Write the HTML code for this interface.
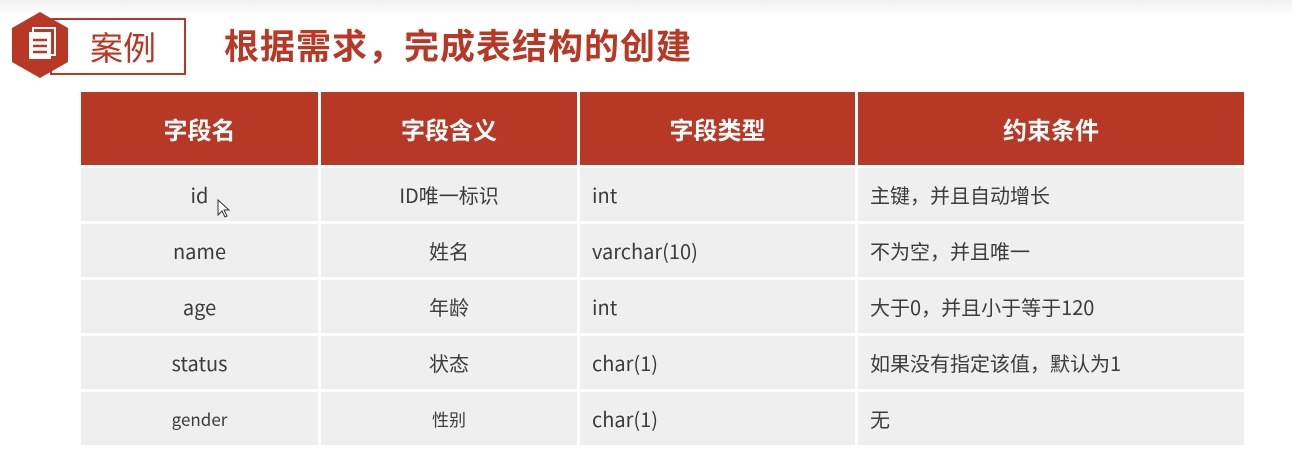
<!DOCTYPE html>
<html><head><meta charset="utf-8"><style>
body{margin:0;width:1292px;height:462px;background:#fff;position:relative;overflow:hidden;font-family:"Noto Sans CJK SC","Liberation Sans",sans-serif}
.top{position:absolute;left:0;top:0;width:1292px;height:16px;background:linear-gradient(#f0f0f0,#fff)}
.box{position:absolute;left:50px;top:18px;width:132px;height:53px;border:2px solid #b83826}
.box span{position:absolute;left:38px;top:4px;font-size:33px;color:#b83826;line-height:44px}
.title{position:absolute;left:224px;top:21px;font-size:35px;font-weight:bold;color:#b83826;line-height:48px;letter-spacing:1px}
table{position:absolute;left:81px;top:92px;border-collapse:separate;border-spacing:0;width:1163px;table-layout:fixed}
th{background:#b83826;color:#fff;font-size:24px;font-weight:bold;height:73px;padding:0;border-right:3px solid #fff;text-align:center;line-height:30px}
td{background:#efefef;height:53px;padding:0;border-right:3px solid #fff;border-top:3px solid #fff;font-size:20px;color:#3c3c3c;line-height:26px;vertical-align:middle}
th:last-child,td:last-child{border-right:none}
.c{text-align:center}.l{padding-left:12px}
</style></head><body>
<div class="top"></div>
<div class="box"><span>案例</span></div>
<svg style="position:absolute;left:10px;top:11px" width="60" height="68" viewBox="0 0 60 68">
<polygon points="30,1 58,17 58,51 30,67 2,51 2,17" fill="#b83826"/>
<rect x="23" y="17" width="22" height="27" fill="none" stroke="#fff" stroke-width="2"/>
<rect x="19" y="21" width="22" height="27" fill="#fff"/>
<path d="M23 29h14M23 35h14M23 41h14" stroke="#b83826" stroke-width="2.5"/>
</svg>
<div class="title">根据需求，完成表结构的创建</div>
<table>
<colgroup><col style="width:240px"><col style="width:259px"><col style="width:278px"><col style="width:386px"></colgroup>
<tr><th>字段名</th><th>字段含义</th><th>字段类型</th><th>约束条件</th></tr>
<tr><td class="c">id</td><td class="c">ID唯一标识</td><td class="l">int</td><td class="l">主键，并且自动增长</td></tr>
<tr><td class="c">name</td><td class="c">姓名</td><td class="l">varchar(10)</td><td class="l">不为空，并且唯一</td></tr>
<tr><td class="c">age</td><td class="c">年龄</td><td class="l">int</td><td class="l">大于0，并且小于等于120</td></tr>
<tr><td class="c">status</td><td class="c">状态</td><td class="l">char(1)</td><td class="l">如果没有指定该值，默认为1</td></tr>
<tr><td class="c" style="font-size:17px">gender</td><td class="c" style="font-size:17px">性别</td><td class="l">char(1)</td><td class="l">无</td></tr>
</table>
<svg style="position:absolute;left:217px;top:199px" width="14" height="20" viewBox="0 0 14 20"><path d="M1 1v15l4-4 3 6 2-1-3-6h5z" fill="#fff" stroke="#333" stroke-width="1"/></svg>
</body></html>
